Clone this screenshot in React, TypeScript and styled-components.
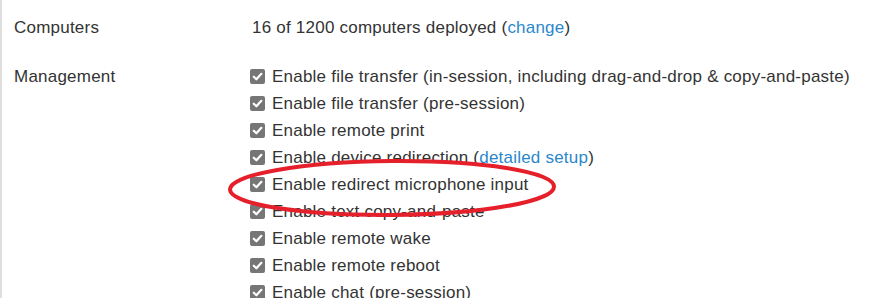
import React from "react";
import styled, { createGlobalStyle } from "styled-components";

const GlobalStyle = createGlobalStyle`
  html, body {
    margin: 0;
    padding: 0;
    background: #fff;
  }
  body {
    width: 896px;
    height: 298px;
    overflow: hidden;
    font-family: "Liberation Sans", Arial, sans-serif;
    font-size: 17px;
    letter-spacing: 0.22px;
    color: #333;
  }
`;

const Panel = styled.div`
  position: relative;
  height: 298px;
  border-left: 2px solid #dedede;
  padding: 14px 0 0 12px;
  box-sizing: border-box;
  display: flex;
  flex-direction: column;
  gap: 22px;
`;

const Row = styled.div`
  display: grid;
  grid-template-columns: 236px 1fr;
  line-height: 27px;
`;

const Label = styled.div`
  color: #333;
`;

const Value = styled.div<{ $indent?: number }>`
  display: flex;
  flex-direction: column;
  padding-left: ${(p) => p.$indent ?? 0}px;
`;

const Link = styled.a`
  color: #2b87cc;
  text-decoration: none;
`;

const Option = styled.label`
  display: flex;
  align-items: center;
  gap: 7px;
  white-space: nowrap;
`;

const Box = styled.span`
  width: 15px;
  height: 15px;
  border-radius: 2px;
  background: #767676;
  display: inline-flex;
  align-items: center;
  justify-content: center;
  flex: none;
  margin-top: -1px;
`;

const Ring = styled.svg`
  position: absolute;
  left: 0;
  top: 0;
  pointer-events: none;
`;

const Check = () => (
  <Box>
    <svg width="11" height="11" viewBox="0 0 10 10">
      <path d="M1.6 5.2 L4 7.5 L8.5 2.6" fill="none" stroke="#fff" strokeWidth="2" strokeLinecap="round" strokeLinejoin="round" />
    </svg>
  </Box>
);

const options: React.ReactNode[] = [
  "Enable file transfer (in-session, including drag-and-drop & copy-and-paste)",
  "Enable file transfer (pre-session)",
  "Enable remote print",
  <>
    Enable device redirection (<Link href="#">detailed setup</Link>)
  </>,
  "Enable redirect microphone input",
  "Enable text copy-and-paste",
  "Enable remote wake",
  "Enable remote reboot",
  "Enable chat (pre-session)",
];

export default function App() {
  return (
    <>
      <GlobalStyle />
      <Panel>
        <Row>
          <Label>Computers</Label>
          <Value $indent={2}>
            <span>
              16 of 1200 computers deployed (<Link href="#">change</Link>)
            </span>
          </Value>
        </Row>
        <Row>
          <Label>Management</Label>
          <Value>
            {options.map((o, i) => (
              <Option key={i}>
                <Check />
                <span>{o}</span>
              </Option>
            ))}
          </Value>
        </Row>
        <Ring width="896" height="298" viewBox="0 0 896 298">
          <ellipse cx="390" cy="188" rx="162" ry="27" fill="none" stroke="#e5202b" strokeWidth="4" transform="rotate(-0.5 390 188)" />
        </Ring>
      </Panel>
    </>
  );
}
